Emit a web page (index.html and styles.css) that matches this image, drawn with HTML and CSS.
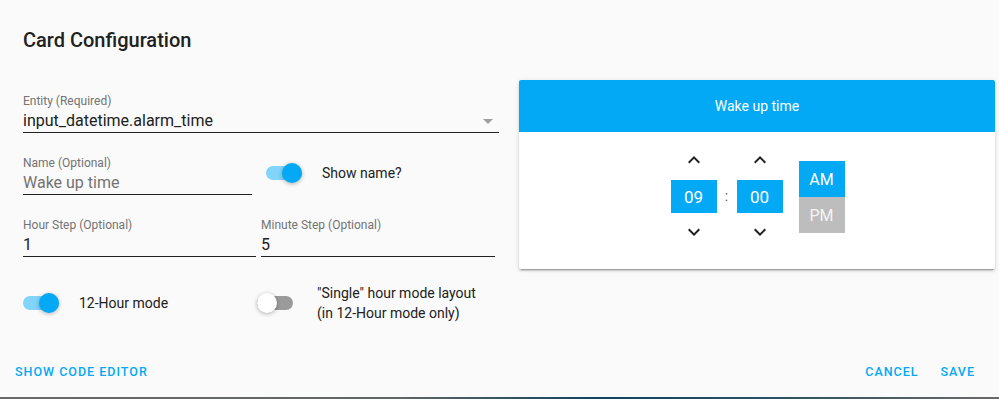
FILE: index.html
```html
<!DOCTYPE html>
<html>
<head>
<meta charset="utf-8">
<link rel="stylesheet" href="styles.css">
</head>
<body>
<div class="dialog">
  <h2 class="title">Card Configuration</h2>
  <div class="content">
    <div class="editor">
      <div class="field field-entity">
        <div class="label">Entity (Required)</div>
        <div class="value">input_datetime.alarm_time<span class="arrow"></span></div>
      </div>
      <div class="row row-name">
        <div class="field field-name">
          <div class="label">Name (Optional)</div>
          <div class="value muted">Wake up time</div>
        </div>
        <div class="toggle-item toggle-show">
          <span class="toggle on"><span class="track"></span><span class="knob"></span></span>
          <span class="toggle-label">Show name?</span>
        </div>
      </div>
      <div class="row row-steps">
        <div class="field field-hour">
          <div class="label">Hour Step (Optional)</div>
          <div class="value">1</div>
        </div>
        <div class="field field-minute">
          <div class="label">Minute Step (Optional)</div>
          <div class="value">5</div>
        </div>
      </div>
      <div class="row row-toggles">
        <div class="toggle-item toggle-12h">
          <span class="toggle on"><span class="track"></span><span class="knob"></span></span>
          <span class="toggle-label">12-Hour mode</span>
        </div>
        <div class="toggle-item toggle-single">
          <span class="toggle"><span class="track"></span><span class="knob"></span></span>
          <span class="toggle-label wide">"Single" hour mode layout<br>(in 12-Hour mode only)</span>
        </div>
      </div>
    </div>
    <div class="card">
      <div class="card-header">Wake up time</div>
      <div class="card-body">
        <div class="unit">
          <svg class="chev" viewBox="0 0 24 24"><path d="M7.41,15.41L12,10.83L16.59,15.41L18,14L12,8L6,14L7.41,15.41Z"/></svg>
          <div class="box">09</div>
          <svg class="chev" viewBox="0 0 24 24"><path d="M7.41,8.58L12,13.17L16.59,8.58L18,10L12,16L6,10L7.41,8.58Z"/></svg>
        </div>
        <div class="colon">:</div>
        <div class="unit">
          <svg class="chev" viewBox="0 0 24 24"><path d="M7.41,15.41L12,10.83L16.59,15.41L18,14L12,8L6,14L7.41,15.41Z"/></svg>
          <div class="box">00</div>
          <svg class="chev" viewBox="0 0 24 24"><path d="M7.41,8.58L12,13.17L16.59,8.58L18,10L12,16L6,10L7.41,8.58Z"/></svg>
        </div>
        <div class="ampm">
          <div class="ap active">AM</div>
          <div class="ap">PM</div>
        </div>
      </div>
    </div>
  </div>
  <div class="buttons">
    <span class="btn btn-code">Show code editor</span>
    <span class="spacer"></span>
    <span class="btn">Cancel</span>
    <span class="btn">Save</span>
  </div>
</div>
</body>
</html>
```

FILE: styles.css
```css
* { box-sizing: border-box; }
html, body { margin: 0; padding: 0; }
body {
  width: 999px;
  height: 399px;
  overflow: hidden;
  font-family: Roboto, "Noto Sans", sans-serif;
  background: linear-gradient(90deg, #6a6a6a 0%, #5e6668 40%, #0f4360 60%, #2f5464 80%, #6a6a6a 100%);
}
.dialog {
  height: 397px;
  background: #fafafa;
  display: flex;
  flex-direction: column;
  color: #212121;
}
.title {
  margin: 28px 0 0 23px;
  font-size: 20px;
  line-height: 24px;
  font-weight: 500;
  color: #212121;
}
.content {
  display: flex;
  gap: 20px;
  margin-top: 28px;
  padding-left: 23px;
  align-items: flex-start;
}
.editor {
  width: 476px;
  padding-top: 13px;
  display: flex;
  flex-direction: column;
}
.field { display: flex; flex-direction: column; border-bottom: 1px solid #212121; }
.label {
  font-size: 12px;
  line-height: 16px;
  color: #737373;
  margin-bottom: 1px;
}
.value {
  font-size: 16px;
  line-height: 22px;
  height: 22px;
  color: #212121;
  position: relative;
}
.value.muted { color: #737373; }
.arrow {
  position: absolute;
  right: 6px;
  top: 9px;
  width: 0; height: 0;
  border-left: 5px solid transparent;
  border-right: 5px solid transparent;
  border-top: 5px solid #9e9e9e;
}
.field-entity { width: 476px; }
.row { display: flex; }
.row-name { margin-top: 22px; align-items: flex-start; }
.field-name { width: 229px; }
.toggle-show { margin-left: 14px; margin-top: 8px; }
.row-steps { margin-top: 22px; gap: 5px; }
.field-hour { width: 233px; }
.field-minute { width: 234px; }
.row-toggles { margin-top: 26px; align-items: center; }
.toggle-12h { width: 234px; }

.toggle-item { display: flex; align-items: center; }
.toggle {
  position: relative;
  width: 36px;
  height: 20px;
  flex: none;
}
.track {
  position: absolute;
  left: 0; top: 3px;
  width: 36px; height: 14px;
  border-radius: 7px;
  background: #9b9b9b;
}
.knob {
  position: absolute;
  left: 0; top: 0;
  width: 20px; height: 20px;
  border-radius: 50%;
  background: #ffffff;
  box-shadow: 0 1px 4px rgba(0,0,0,0.3);
}
.toggle.on .track { background: #81d4fa; }
.toggle.on .knob { left: 16px; background: #03a9f4; }
.toggle-label {
  margin-left: 20px;
  font-size: 14px;
  line-height: 20px;
  color: #212121;
}
.toggle-label.wide { margin-left: 24px; }

.card {
  width: 476px;
  background: #ffffff;
  border-radius: 2px;
  overflow: hidden;
  box-shadow: 0 2px 2px 0 rgba(0,0,0,.14), 0 1px 5px 0 rgba(0,0,0,.12), 0 3px 1px -2px rgba(0,0,0,.2);
}
.card-header {
  height: 52px;
  background: #03a9f4;
  color: #ffffff;
  font-size: 14px;
  display: flex;
  align-items: center;
  justify-content: center;
  padding-bottom: 1px;
}
.card-body {
  height: 137px;
  display: flex;
  align-items: center;
  justify-content: center;
  padding-left: 1px;
  padding-bottom: 9px;
}
.unit {
  display: flex;
  flex-direction: column;
  align-items: center;
  width: 46px;
}
.chev { width: 24px; height: 24px; fill: #212121; }
.unit .chev:first-child { margin-bottom: 8px; }
.unit .chev:last-child { margin-top: 7px; }
.box {
  width: 46px;
  height: 33px;
  background: #03a9f4;
  color: #ffffff;
  font-size: 17px;
  display: flex;
  align-items: center;
  justify-content: center;
}
.colon {
  width: 20px;
  text-align: center;
  font-size: 14px;
  color: #555;
}
.ampm { margin-left: 16px; display: flex; flex-direction: column; margin-top: 2px; }
.ap {
  width: 46px;
  height: 36px;
  background: #bdbdbd;
  color: #f4f4f4;
  font-size: 16px;
  display: flex;
  align-items: center;
  justify-content: center;
}
.ap.active { background: #03a9f4; color: #ffffff; }

.buttons {
  margin-top: auto;
  margin-bottom: 7px;
  display: flex;
  align-items: center;
  padding: 0 16px 0 7px;
}
.btn {
  height: 36px;
  line-height: 36px;
  padding: 0 8px;
  font-size: 12.5px;
  font-weight: 500;
  letter-spacing: 1px;
  text-transform: uppercase;
  color: #03a9f4;
}
.btn + .btn { margin-left: 6px; }
.spacer { flex: 1; }
```
